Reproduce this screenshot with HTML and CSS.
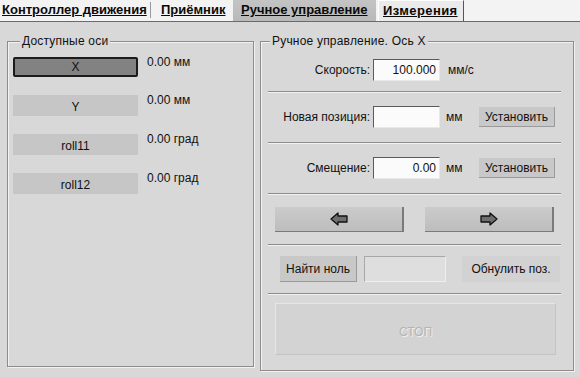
FILE: index.html
```html
<!DOCTYPE html>
<html lang="ru">
<head>
<meta charset="utf-8">
<title>Ручное управление</title>
<link rel="stylesheet" href="styles.css">
</head>
<body>
<div class="window">
  <div class="tabs">
    <span class="tab t1">Контроллер движения</span>
    <span class="tab-sep"></span>
    <span class="tab t2">Приёмник</span>
    <span class="tab t3 active">Ручное управление</span>
    <span class="tab t4 boxed">Измерения</span>
  </div>
  <div class="page">
    <fieldset class="group axes">
      <legend>Доступные оси</legend>
      <div class="axis-row"><div class="axis selected">X</div><span class="val">0.00 мм</span></div>
      <div class="axis-row"><div class="axis">Y</div><span class="val">0.00 мм</span></div>
      <div class="axis-row"><div class="axis">roll11</div><span class="val">0.00 град</span></div>
      <div class="axis-row"><div class="axis">roll12</div><span class="val">0.00 град</span></div>
    </fieldset>
    <fieldset class="group manual">
      <legend>Ручное управление. Ось X</legend>
      <div class="sec s1">
        <span class="lbl">Скорость:</span>
        <div class="edit num">100.000</div>
        <span class="unit u1">мм/с</span>
      </div>
      <div class="sec s2">
        <span class="lbl">Новая позиция:</span>
        <div class="edit"></div>
        <span class="unit">мм</span>
        <div class="btn set">Установить</div>
      </div>
      <div class="sec s3">
        <span class="lbl">Смещение:</span>
        <div class="edit num">0.00</div>
        <span class="unit">мм</span>
        <div class="btn set">Установить</div>
      </div>
      <div class="sec s4">
        <div class="btn arrow">
          <svg width="18" height="14" viewBox="0 0 18 14"><path d="M1 7 L8 1 L8 4 L17 4 L17 10 L8 10 L8 13 Z" fill="#6e6e6e" stroke="#111" stroke-width="1.3" stroke-linejoin="round"/></svg>
        </div>
        <div class="btn arrow">
          <svg width="18" height="14" viewBox="0 0 18 14"><path d="M17 7 L10 1 L10 4 L1 4 L1 10 L10 10 L10 13 Z" fill="#6e6e6e" stroke="#111" stroke-width="1.3" stroke-linejoin="round"/></svg>
        </div>
      </div>
      <div class="sec s5">
        <div class="btn zero">Найти ноль</div>
        <div class="edit off"></div>
        <div class="btn reset">Обнулить поз.</div>
      </div>
      <div class="sec s6">
        <div class="btn stop">СТОП</div>
      </div>
    </fieldset>
  </div>
</div>
</body>
</html>
```
FILE: styles.css
```css
* { box-sizing: border-box; }
html, body { margin: 0; padding: 0; }
body {
  width: 580px;
  height: 377px;
  overflow: hidden;
  background: #d8d8d8;
  font-family: "Liberation Sans", Arial, sans-serif;
  font-size: 12px;
  color: #111;
}
.window { width: 580px; height: 377px; display: flex; flex-direction: column; }

/* tabs */
.tabs {
  height: 22px;
  display: flex;
  align-items: stretch;
  background: #f3f3f3;
  border-bottom: 1px solid #6a6a6a;
  flex: none;
}
.tab {
  font-weight: bold;
  font-size: 13px;
  text-decoration: underline;
  line-height: 20px;
  white-space: nowrap;
  color: #0a0a0a;
}
.t1 { width: 150px; padding-left: 2px; }
.tab-sep { width: 1px; margin: 2px 1px 3px 0; background: #9a9a9a; }
.t2 { width: 81px; padding-left: 9px; }
.t3 {
  width: 143px;
  padding-left: 8px;
  background: linear-gradient(#c4c4c4, #b9b9b9);
}
.t4 {
  margin-left: 2px;
  width: 86px;
  padding-left: 4px;
  border-left: 1px solid #fff;
  border-right: 1px solid #555;
  border-top: 1px solid #fff;
  background: #ebebeb;
  letter-spacing: 0.4px;
}

/* page */
.page {
  flex: 1;
  display: flex;
  align-items: flex-start;
  padding: 12px 0 0 7px;
  gap: 6px;
}
.group {
  margin: 0;
  min-width: 0;
  border: 1px solid #8c8c8c;
  box-shadow: inset 1px 1px 0 #f2f2f2, 1px 1px 0 #f2f2f2;
}
.group legend {
  line-height: 14px;
  padding: 0 2px;
  background: #d8d8d8;
  white-space: nowrap;
  letter-spacing: 0.2px;
}
.axes { width: 247px; height: 333px; padding: 9px 5px 0 5px; }
.axes legend { margin-left: 7px; }
.manual { width: 314px; height: 337px; padding: 0 12px 0 7px; }
.manual legend { margin-left: 2px; }

/* axes list */
.axis-row {
  display: flex;
  align-items: flex-start;
  margin-bottom: 18px;
}
.axis {
  width: 125px;
  height: 21px;
  background: #c6c6c6;
  text-align: center;
  line-height: 24px;
}
.axis.selected {
  height: 20px;
  background: #828282;
  border: 2px solid #1b1b1b;
  border-radius: 2px;
  line-height: 17px;
}
.val { margin-left: 9px; margin-top: -2px; white-space: nowrap; }

/* manual sections */
.sec {
  display: flex;
  align-items: center;
  border-bottom: 1px solid #8c8c8c;
  box-shadow: 0 1px 0 #f2f2f2;
}
.s1 { height: 44px; }
.s2, .s3, .s4 { height: 51px; }
.s5 { height: 49px; }
.s6 { border-bottom: 0; box-shadow: none; align-items: flex-start; height: 76px; }

.lbl { width: 102px; text-align: right; white-space: nowrap; }
.edit {
  width: 67px;
  height: 22px;
  margin-left: 3px;
  background: #fbfbfb;
  border-top: 1px solid #5a5a5a;
  border-left: 1px solid #5a5a5a;
  border-bottom: 1px solid #e8e8e8;
  border-right: 1px solid #e8e8e8;
  line-height: 20px;
  padding-right: 3px;
  text-align: right;
}
.unit { width: 39px; padding-left: 6px; white-space: nowrap; }
.u1 { padding-left: 8px; }

.btn {
  display: flex;
  align-items: center;
  justify-content: center;
  white-space: nowrap;
  background: #c8c8c8;
  border-bottom: 1px solid #9a9a9a;
  border-right: 1px solid #9a9a9a;
}
.set { width: 76px; height: 20px; }

.s4 { padding-left: 7px; gap: 21px; }
.arrow {
  width: 129px;
  height: 25px;
  background: linear-gradient(#cbcbcb, #bdbdbd);
  border-bottom: 1px solid #7a7a7a;
  border-right: 2px solid #7a7a7a;
}

.s5 { padding-left: 12px; }
.zero { width: 77px; height: 26px; }
.edit.off {
  width: 82px;
  height: 26px;
  margin-left: 7px;
  background: #dedede;
  border-color: #a8a8a8 #eeeeee #eeeeee #a8a8a8;
}
.reset { width: 98px; height: 26px; margin-left: 16px; background: #d2d2d2; border: 0; }

.stop {
  margin: 9px 0 0 7px;
  width: 281px;
  height: 52px;
  background: #d3d3d3;
  border: 1px solid #c4c4c4;
  border-top-color: #e6e6e6;
  border-left-color: #e6e6e6;
  color: #b4b4b4;
  text-shadow: 1px 1px 0 #efefef;
  padding-top: 6px;
}
```
